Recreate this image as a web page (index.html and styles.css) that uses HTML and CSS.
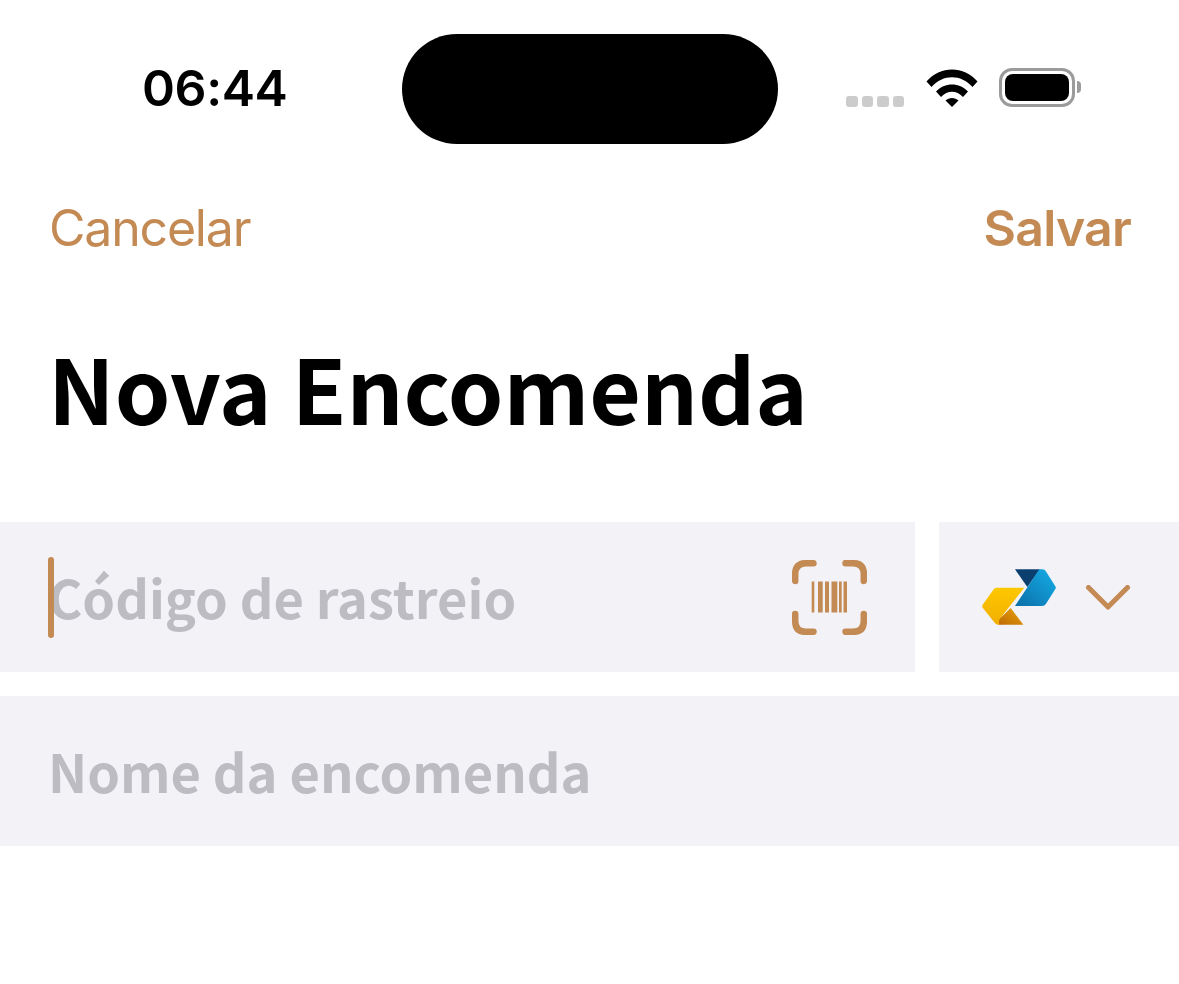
FILE: index.html
```html
<!DOCTYPE html>
<html lang="pt-BR">
<head>
    <meta charset="UTF-8">
    <meta name="viewport" content="width=device-width, initial-scale=1.0">
    <title>Nova Encomenda</title>
    <link rel="stylesheet" href="styles.css">
</head>
<body>
    <div class="screen">
        <!-- barra de status -->
        <div class="status-bar">
            <div class="status-time">06:44</div>
            <div class="island"></div>
            <div class="status-icons">
                <div class="signal">
                    <span></span><span></span><span></span><span></span>
                </div>
                <svg class="wifi" width="52" height="38" viewBox="0 0 52 38">
                    <path d="M0.5 12.5 C14 -3.5 38 -3.5 51.5 12.5 L46.5 18 C35 5 17 5 5.500 18 Z" fill="#000"/>
                    <path d="M10 22.500 C18.500 13 33.500 13 42 22.500 L37 28 C30.500 21 21.500 21 15 28 Z" fill="#000"/>
                    <path d="M19.500 31.500 C23 28 29 28 32.500 31.500 L26 38 Z" fill="#000"/>
                </svg>
                <div class="battery">
                    <div class="battery-body"><div class="battery-fill"></div></div>
                    <div class="battery-cap"></div>
                </div>
            </div>
        </div>

        <!-- navegação -->
        <div class="nav">
            <a class="nav-link">Cancelar</a>
            <a class="nav-link nav-save">Salvar</a>
        </div>

        <h1 class="title">Nova Encomenda</h1>

        <!-- formulário -->
        <div class="form">
            <div class="form-row">
                <div class="field field-code">
                    <span class="caret"></span>
                    <span class="placeholder">Código de rastreio</span>
                    <svg class="scan-icon" width="75" height="75" viewBox="0 0 75 75">
                        <g fill="none" stroke="#c48a54" stroke-width="6.500" stroke-linecap="round">
                            <path d="M3.200 21 V14 Q3.200 3.200 14 3.200 H21.500"/>
                            <path d="M53.500 3.200 H61 Q71.800 3.200 71.800 14 V21"/>
                            <path d="M3.200 54 V61 Q3.200 71.800 14 71.800 H21.500"/>
                            <path d="M53.500 71.800 H61 Q71.800 71.800 71.800 61 V54"/>
                        </g>
                        <g fill="#c48a54">
                            <rect x="19.700" y="21.500" width="2.600" height="31"/>
                            <rect x="26" y="21.500" width="4.700" height="31"/>
                            <rect x="33" y="21.500" width="4" height="31"/>
                            <rect x="39.500" y="21.500" width="5.800" height="31"/>
                            <rect x="47" y="21.500" width="2.700" height="31"/>
                            <rect x="51.500" y="21.500" width="3.500" height="31"/>
                        </g>
                    </svg>
                </div>
                <div class="field field-carrier">
                    <svg class="carrier-logo" width="75" height="56" viewBox="36 26 225 168">
                        <defs>
                            <linearGradient id="blue" x1="0" y1="1" x2="1" y2="0">
                                <stop offset="0" stop-color="#0a6ea8"/>
                                <stop offset="1" stop-color="#16aee8"/>
                            </linearGradient>
                            <linearGradient id="yellow" x1="0" y1="0" x2="0" y2="1">
                                <stop offset="0" stop-color="#fdc801"/>
                                <stop offset="1" stop-color="#f2ae00"/>
                            </linearGradient>
                            <linearGradient id="amber" x1="0" y1="1" x2="1" y2="0">
                                <stop offset="0" stop-color="#c06a08"/>
                                <stop offset="1" stop-color="#e8a404"/>
                            </linearGradient>
                        </defs>
                        <path d="M135 27 H210 L172 80 Z" fill="#0b3f70"/>
                        <path d="M208 27 H218 Q224 27 227 32 L256 78 Q259 82 256 86 L228 130 Q224 137 216 137 H135 Z" fill="url(#blue)"/>
                        <path d="M80 82 H163 L92 172 L92 193 H84 Q78 193 74 187 L38 142 Q35 138 38 133 L70 88 Q74 82 80 82 Z" fill="url(#yellow)"/>
                        <path d="M122 143 L160 193 H88 Q84 180 92 172 Z" fill="url(#amber)"/>
                    </svg>
                    <svg class="chevron" width="44" height="25" viewBox="0 0 44 25">
                        <path d="M2.500 2.500 L22 22 L41.500 2.500" fill="none" stroke="#c48a54" stroke-width="5" stroke-linecap="round" stroke-linejoin="round"/>
                    </svg>
                </div>
            </div>
            <div class="field field-name">
                <span class="placeholder">Nome da encomenda</span>
            </div>
        </div>
    </div>
</body>
</html>
```

FILE: styles.css
```css
* {
    margin: 0;
    padding: 0;
    box-sizing: border-box;
}

body {
    background: #fff;
    font-family: Inter, "Liberation Sans", sans-serif;
    color: #000;
}

.screen {
    height: 984px;
    overflow: hidden;
}

/* barra de status */
.status-bar {
    height: 170px;
    padding-top: 34px;
    display: flex;
    align-items: flex-start;
}

.status-time {
    width: 402px;
    height: 110px;
    padding-left: 142px;
    font-size: 50px;
    font-weight: 600;
    line-height: 108px;
    letter-spacing: -0.4px;
}

.island {
    width: 376px;
    height: 110px;
    background: #000;
    border-radius: 55px;
}

.status-icons {
    height: 110px;
    padding-left: 68px;
    display: flex;
    align-items: center;
    gap: 22px;
}

.signal {
    display: flex;
    gap: 4px;
    margin-top: 24px;
}

.signal span {
    width: 11.5px;
    height: 11px;
    border-radius: 3px;
    background: #cccccc;
}

.wifi {
    margin-top: -2px;
}

.battery {
    display: flex;
    align-items: center;
    gap: 2px;
    margin-top: -4px;
    margin-left: -1px;
}

.battery-body {
    width: 76px;
    height: 39px;
    border: 3px solid #9b9b9b;
    border-radius: 13px;
    padding: 3px;
}

.battery-fill {
    width: 100%;
    height: 100%;
    background: #000;
    border-radius: 8px;
}

.battery-cap {
    width: 4px;
    height: 12px;
    background: #9b9b9b;
    border-radius: 0 6px 6px 0;
}

/* navegação */
.nav {
    display: flex;
    justify-content: space-between;
    padding: 0 48px 0 49px;
    height: 116px;
    line-height: 116px;
}

.nav-link {
    font-size: 50px;
    color: #c48a54;
    letter-spacing: -1.2px;
}

.nav-save {
    font-weight: 600;
    letter-spacing: -0.8px;
}

.title {
    font-family: "Noto Sans CJK JP", "Noto Sans", sans-serif;
    font-size: 89px;
    font-weight: 700;
    line-height: 130px;
    padding: 36px 0 0 48px;
    height: 236px;
}

/* formulário */
.form {
    display: flex;
    flex-direction: column;
    gap: 24px;
}

.form-row {
    display: flex;
    gap: 24px;
}

.field {
    height: 150px;
    background: #f2f2f7;
    display: flex;
    align-items: center;
}

.field-code {
    position: relative;
    width: 915px;
    padding: 0 48px;
    justify-content: space-between;
}

.field-carrier {
    width: 240px;
    padding-left: 43px;
    gap: 29px;
}

.field-name {
    padding-left: 48px;
}

.placeholder {
    font-family: "Noto Sans CJK JP", "Noto Sans", sans-serif;
    font-size: 52.4px;
    font-weight: 700;
    color: #bcbcc2;
    margin-top: -2px;
}

.caret {
    position: absolute;
    left: 48px;
    top: 35px;
    width: 6px;
    height: 81px;
    background: #c48a54;
    border-radius: 3px;
}
```
